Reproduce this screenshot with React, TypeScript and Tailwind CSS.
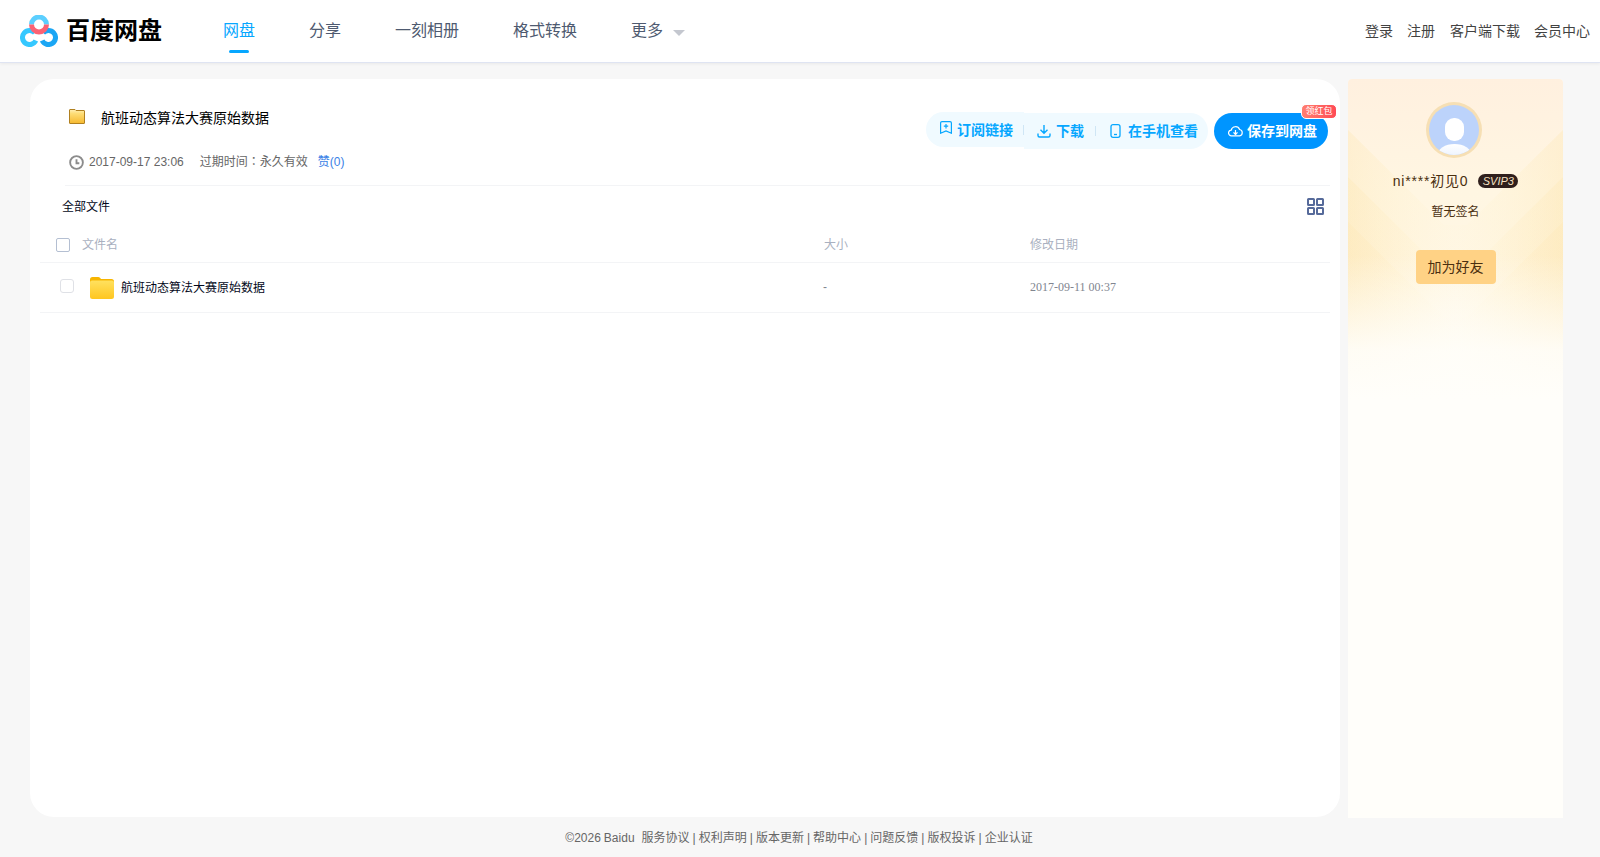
const cjk = "font-['Liberation_Sans','Noto_Sans_CJK_SC',sans-serif]";

function Logo() {
  return (
    <svg width="38" height="32" viewBox="0 0 38 32" fill="none" className="shrink-0">
      <path d="M14.860 18A7 7 0 1 0 15.840 25.460" stroke="#35c8ff" strokeWidth="5" />
      <path d="M23.140 18A7 7 0 1 1 22.160 25.460" stroke="#1ba6f4" strokeWidth="5" />
      <path d="M11.500 9.500a7.500 7.500 0 0 1 15 0" stroke="#5ccfff" strokeWidth="5" />
      <path d="M11.500 9.500a7.500 7.500 0 0 0 15 0" stroke="#fb6274" strokeWidth="5" />
    </svg>
  );
}

function TitleFolder() {
  return (
    <svg width="16" height="15" viewBox="0 0 16 15">
      <defs>
        <linearGradient id="tf" x1="0" y1="0" x2="0" y2="1">
          <stop offset="0" stopColor="#ffefb5" />
          <stop offset="0.300" stopColor="#fddc74" />
          <stop offset="1" stopColor="#f6b92f" />
        </linearGradient>
      </defs>
      <path d="M.5 1a.5.5 0 0 1 .5-.5h5l1 1h8a.5.5 0 0 1 .5.500V14a.5.5 0 0 1-.5.500H1a.5.5 0 0 1-.5-.500z" fill="url(#tf)" stroke="#b08020" />
    </svg>
  );
}

function RowFolder() {
  return (
    <svg width="24" height="22" viewBox="0 0 24 22">
      <defs>
        <linearGradient id="rf" x1="0" y1="0" x2="0" y2="1">
          <stop offset="0" stopColor="#ffe15f" />
          <stop offset="1" stopColor="#ffc61f" />
        </linearGradient>
      </defs>
      <path d="M0 2.500A2.500 2.500 0 0 1 2.500 0h5.600c.9 0 1.600.4 2.100 1l.8 1h10.500A2.500 2.500 0 0 1 24 4.500V8H0z" fill="#f7b500" />
      <path d="M0 5.500A2 2 0 0 1 2 3.500h20a2 2 0 0 1 2 2V19.500a2.500 2.500 0 0 1-2.500 2.500h-19A2.500 2.500 0 0 1 0 19.500z" fill="url(#rf)" />
    </svg>
  );
}

function Clock() {
  return (
    <svg width="15" height="15" viewBox="0 0 16 16" fill="none" stroke="#8c8c8c" strokeWidth="2" className="mt-px">
      <circle cx="8" cy="8" r="6.800" />
      <path d="M8 4.500V8.800H11" />
    </svg>
  );
}

function GridIcon() {
  return (
    <svg width="17" height="17" viewBox="0 0 17 17" fill="none" stroke="#566a9a" strokeWidth="2" className="mb-px">
      <rect x="1" y="1" width="6" height="6" rx="0.500" />
      <rect x="10" y="1" width="6" height="6" rx="0.500" />
      <rect x="1" y="10" width="6" height="6" rx="0.500" />
      <rect x="10" y="10" width="6" height="6" rx="0.500" />
    </svg>
  );
}

function SubIcon() {
  return (
    <svg width="12" height="13" viewBox="0 0 12 13" fill="none" stroke="#06a7ff" strokeWidth="1.200" className="mb-1">
      <path d="M.6 2A1.400 1.400 0 0 1 2 .6h8A1.400 1.400 0 0 1 11.400 2v10.200L6 10 .6 12.200z" />
      <path d="M6 3v4.500M3.800 5.200H8.200" />
    </svg>
  );
}

function DownIcon() {
  return (
    <svg width="14" height="14" viewBox="0 0 14 14" fill="none" stroke="#06a7ff" strokeWidth="1.400">
      <path d="M7 1v8M3.500 5.800 7 9.300l3.500-3.500M1 9.500v2a1.500 1.500 0 0 0 1.500 1.500h9a1.500 1.500 0 0 0 1.500-1.500v-2" />
    </svg>
  );
}

function PhoneIcon() {
  return (
    <svg width="11" height="14" viewBox="0 0 11 14" fill="none" stroke="#06a7ff" strokeWidth="1.300">
      <rect x="1" y="0.700" width="9" height="12.600" rx="2" />
      <path d="M4 10.500h3" />
    </svg>
  );
}

function CloudIcon() {
  return (
    <svg width="15" height="12" viewBox="0 0 15 12" fill="none" stroke="#fff" strokeWidth="1.200">
      <path d="M4 10.800H3.500a2.800 2.800 0 0 1-.3-5.600 4.400 4.400 0 0 1 8.400-.7 3.200 3.200 0 0 1 0 6.300H3.500" />
      <path d="M7.500 9.500V5M5.500 7.300 7.500 9.500l2-2.200" />
    </svg>
  );
}

function Avatar() {
  return (
    <div className="mr-[3px] flex h-14 w-14 items-center justify-center rounded-full bg-[#f6dfb4]">
      <svg width="50" height="50" viewBox="0 0 50 50">
        <defs>
          <clipPath id="av">
            <circle cx="25" cy="25" r="25" />
          </clipPath>
          <linearGradient id="shoulder" x1="0" y1="0" x2="0" y2="1">
            <stop offset="0" stopColor="#fff" />
            <stop offset="1" stopColor="#dfeafd" />
          </linearGradient>
        </defs>
        <circle cx="25" cy="25" r="25" fill="#bcd3fb" />
        <g clipPath="url(#av)">
          <rect x="16" y="13" width="19" height="23" rx="9" fill="#fff" />
          <ellipse cx="25.500" cy="50" rx="17" ry="11" fill="url(#shoulder)" />
        </g>
      </svg>
    </div>
  );
}

function SidebarBg() {
  return (
    <svg className="absolute inset-x-0 top-0" width="215" height="320" viewBox="0 0 215 320">
      <defs>
        <linearGradient id="base" x1="0" y1="0" x2="0" y2="1">
          <stop offset="0" stopColor="#fff0df" />
          <stop offset="0.350" stopColor="#fff6e2" />
          <stop offset="1" stopColor="#fff8e8" />
        </linearGradient>
        <linearGradient id="band" x1="0" y1="0" x2="1" y2="0">
          <stop offset="0" stopColor="#fde8b8" stopOpacity="0.400" />
          <stop offset="0.500" stopColor="#fff3cf" stopOpacity="0.050" />
          <stop offset="1" stopColor="#fde8b8" stopOpacity="0.400" />
        </linearGradient>
        <linearGradient id="fade" x1="0" y1="0" x2="0" y2="1">
          <stop offset="0" stopColor="#fffefa" stopOpacity="0" />
          <stop offset="0.550" stopColor="#fffefa" stopOpacity="0" />
          <stop offset="0.850" stopColor="#fffefa" stopOpacity="0.900" />
          <stop offset="1" stopColor="#fffefa" stopOpacity="1" />
        </linearGradient>
      </defs>
      <rect width="215" height="320" fill="url(#base)" />
      <path d="M0 51 96 146H119L215 51V320H0Z" fill="url(#band)" />
      <path d="M0 98 96 193H119L215 98V320H0Z" fill="url(#band)" />
      <path d="M0 143 96 238H119L215 143V320H0Z" fill="url(#band)" />
      <rect width="215" height="320" fill="url(#fade)" />
    </svg>
  );
}

export default function App() {
  return (
    <div className={`flex h-[857px] w-[1600px] flex-col overflow-hidden bg-[#f7f7f7] ${cjk}`}>
      <header className="flex h-[63px] shrink-0 items-center justify-between border-b border-[#dfe4f2] bg-white pr-[10px] pl-5 shadow-[0_1px_3px_rgba(0,0,0,0.06)]">
        <div className="flex items-center">
          <Logo />
          <span className="ml-2 w-[96px] text-2xl leading-none font-bold whitespace-nowrap text-black">百度网盘</span>
          <nav className="ml-[61px] flex h-[62px] items-center gap-[54px] text-base text-[#4e5a70]">
            <a className="relative text-[#06a7ff]">
              网盘
              <span className="absolute top-[31px] left-[6px] h-[3px] w-5 rounded-full bg-[#06a7ff]" />
            </a>
            <a>分享</a>
            <a>一刻相册</a>
            <a>格式转换</a>
            <a className="flex items-center">
              更多
              <span className="mt-[3px] ml-[10px] h-0 w-0 border-x-[6px] border-t-[6px] border-x-transparent border-t-[#c4c7cf]" />
            </a>
          </nav>
        </div>
        <div className="flex items-center gap-[14px] text-sm text-[#424242]">
          <a>登录</a>
          <a>注册</a>
          <a className="ml-px">客户端下载</a>
          <a>会员中心</a>
        </div>
      </header>

      <main className="flex min-h-0 flex-1 pt-4 pl-[30px]">
        <section className="flex h-[738px] w-[1310px] flex-col rounded-3xl bg-white px-[10px]">
          <div className="flex h-[106px] shrink-0 items-start justify-between pl-[29px]">
            <div>
              <div className="mt-[30px] flex h-[18px] items-center">
                <span className="mb-1 flex"><TitleFolder /></span>
                <h2 className="ml-4 text-sm leading-none text-black">航班动态算法大赛原始数据</h2>
              </div>
              <div className="mt-[26px] flex items-center text-xs text-[#666]">
                <Clock />
                <span className="ml-[5px]">2017-09-17 23:06</span>
                <span className="ml-4">过期时间<span className="font-['Noto_Sans_CJK_TC',sans-serif]">：</span>永久有效</span>
                <span className="ml-[10px] text-[#3b82e6]">赞(0)</span>
              </div>
            </div>
            <div className="mt-[33px] mr-[2px] flex items-start text-sm font-bold text-[#06a7ff]">
              <div className="flex h-[35px] items-center rounded-l-full bg-[#f0faff] pl-[14px]">
                <span className="flex items-center gap-[5px]"><SubIcon />订阅链接</span>
                <span className="ml-[10px] h-[10px] w-px bg-[#cfe6f5]" />
              </div>
              <div className="mt-px flex h-[36px] items-center rounded-r-full bg-[#f0faff] pr-[10px] pl-[13px]">
                <span className="flex items-center gap-[5px]"><DownIcon />下载</span>
                <span className="mx-[11px] h-[10px] w-px bg-[#cfe6f5]" />
                <span className="ml-[3px] flex items-center gap-[7px]"><PhoneIcon />在手机查看</span>
              </div>
              <button className="relative mt-px ml-[6px] flex h-[36px] w-[114px] items-center gap-[4px] rounded-full bg-[#0095ff] pl-[14px] text-white">
                <CloudIcon />保存到网盘
                <span className="absolute -top-[9px] -right-[9px] flex h-[15px] w-[36px] items-center justify-center rounded-[5px] border border-white bg-gradient-to-r from-[#ff7d70] to-[#ff4a55] text-[9px] font-normal text-white">领红包</span>
              </button>
            </div>
          </div>

          <div className="ml-[25px] border-t border-[#f3f4f6]" />

          <div className="flex h-[42px] shrink-0 items-center justify-between pr-[6px] pl-[22px] text-xs text-[#03081a]">
            <span>全部文件</span>
            <GridIcon />
          </div>

          <div className="flex h-[35px] shrink-0 items-center border-b border-[#f3f4f6] pl-[16px] text-xs text-[#a9b0c0]">
            <span className="h-[14px] w-[14px] rounded-[2px] border border-[#b4bfd2]" />
            <span className="ml-3 w-[742px]">文件名</span>
            <span className="w-[206px]">大小</span>
            <span>修改日期</span>
          </div>

          <div className="flex h-[50px] shrink-0 items-center border-b border-[#f3f4f6] pl-[20px] text-xs text-[#03081a]">
            <span className="mb-1 h-[14px] w-[14px] rounded-[3px] border border-[#dfe1e6]" />
            <span className="ml-4 flex"><RowFolder /></span>
            <span className="ml-[7px] w-[702px]">航班动态算法大赛原始数据</span>
            <span className="mb-[2px] w-[207px] text-[#81858f]">-</span>
            <span className="mb-[2px] font-['Liberation_Serif',serif] text-[#81858f]">2017-09-11 00:37</span>
          </div>
        </section>

        <aside className="relative ml-2 h-[739px] w-[215px] overflow-hidden rounded-t-[4px] bg-[#fffefa]">
          <SidebarBg />
          <div className="relative flex flex-col items-center pt-[23px] text-[#4a2f10]">
            <Avatar />
            <div className="mt-[13px] flex items-center text-sm leading-5 tracking-[0.8px]">
              ni****初见0
              <span className="ml-[10px] flex h-[14px] w-10 items-center justify-center rounded-full bg-[#2f1f1c] text-[11px] leading-none font-normal tracking-normal text-[#f6e3c4] italic">SVIP3</span>
            </div>
            <div className="mt-[13px] text-xs leading-4">暂无签名</div>
            <button className="mt-[30px] h-[34px] w-20 rounded-[4px] bg-[#ffd285] text-sm text-[#4a2f10]">加为好友</button>
          </div>
        </aside>
      </main>

      <footer className="flex h-[40px] shrink-0 items-center justify-center pt-[2px] pr-[2px] text-xs text-[#666] [word-spacing:-0.3px]">
        <span>©2026 Baidu</span>
        <span className="ml-[7px]">服务协议 | 权利声明 | 版本更新 | 帮助中心 | 问题反馈 | 版权投诉 | 企业认证</span>
      </footer>
    </div>
  );
}
